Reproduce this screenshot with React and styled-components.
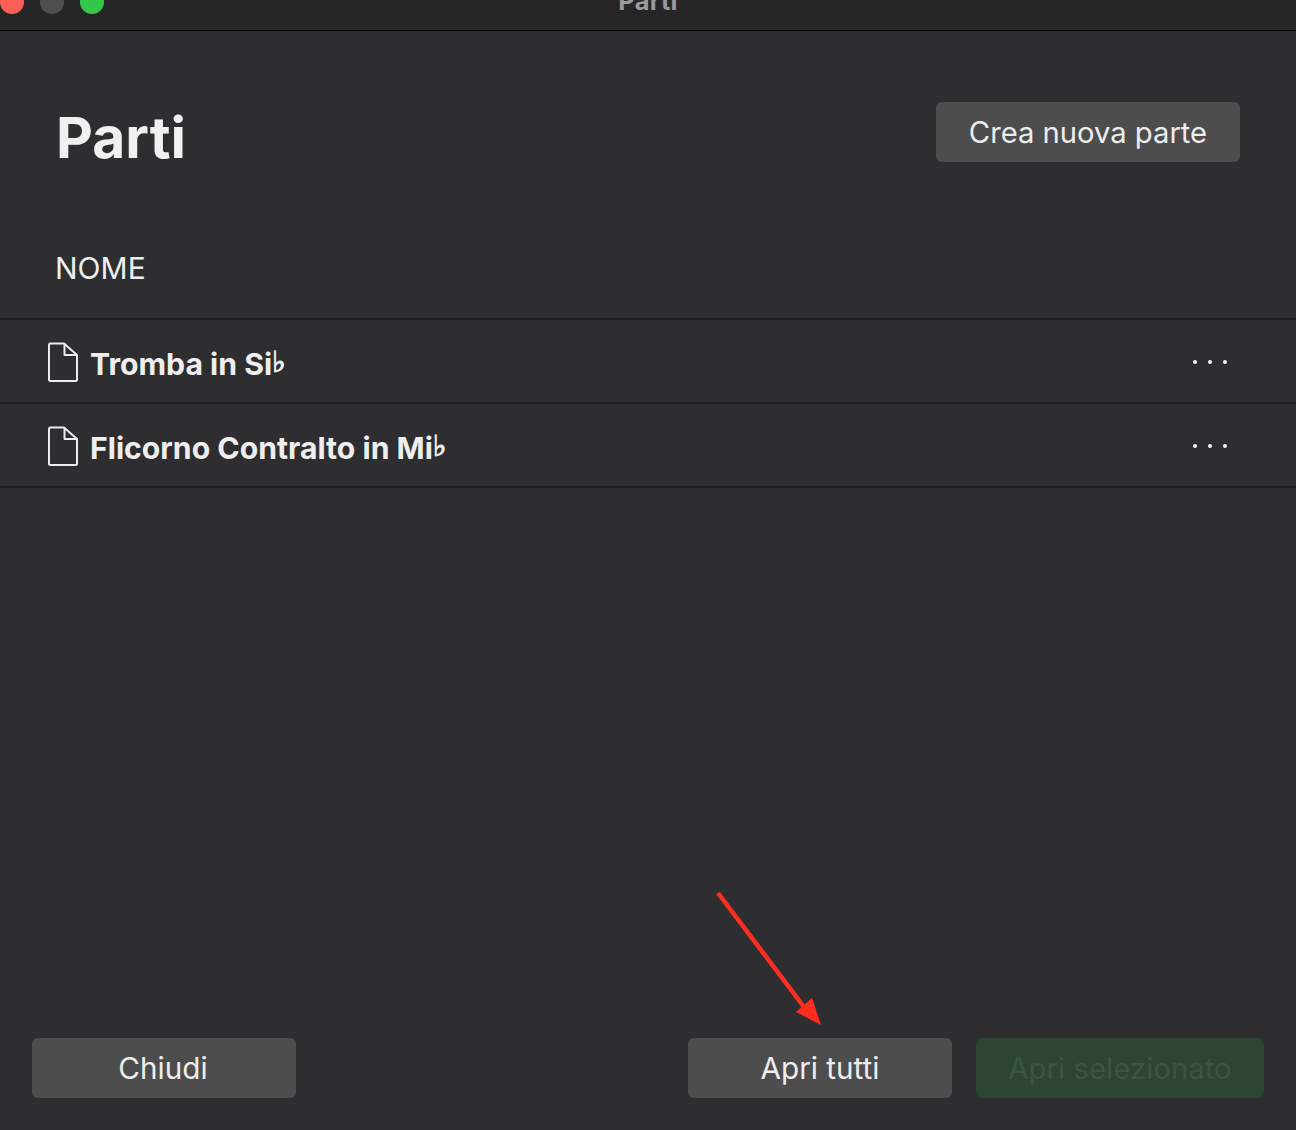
import React from "react";
import styled, { createGlobalStyle } from "styled-components";

const Global = createGlobalStyle`
  html, body { margin: 0; padding: 0; background: #2e2e30; }
  * { box-sizing: border-box; }
`;
const Window = styled.div`
  position: relative;
  width: 1296px;
  height: 1130px;
  overflow: hidden;
  display: flex;
  flex-direction: column;
  background: #2e2e30;
  color: #f0f0f0;
  font-family: Inter, "Liberation Sans", sans-serif;
`;
const TitleBar = styled.div`
  flex: none;
  height: 31px;
  background: #262626;
  border-bottom: 1px solid #000;
  display: grid;
  grid-template-columns: 1fr auto 1fr;
  overflow: hidden;
`;
const Lights = styled.div`
  display: flex;
  gap: 16px;
  margin: -10px 0 0 0;
  height: 24px;
`;
const Light = styled.span`
  width: 24px;
  height: 24px;
  border-radius: 50%;
  background: ${(p) => p.$c};
`;
const WindowTitle = styled.div`
  margin-top: -14px;
  font-size: 25.500px;
  line-height: 30px;
  font-weight: 700;
  color: #9a9a9a;
  letter-spacing: 0.3px;
`;
const Header = styled.div`
  flex: none;
  display: flex;
  justify-content: space-between;
  align-items: flex-start;
  padding: 71px 56px 0 56px;
  height: 205px;
`;
const Heading = styled.h1`
  margin: 2px 0 0;
  font-size: 57px;
  line-height: 68px;
  font-weight: 700;
  color: #f0f0f0;
`;
const Button = styled.button`
  width: ${(p) => p.$w}px;
  height: 60px;
  border: 0;
  border-radius: 6px;
  background: ${(p) => (p.$disabled ? "#2c4633" : "#4d4d4d")};
  color: ${(p) => (p.$disabled ? "#3c5543" : "#ededed")};
  font-family: inherit;
  font-size: ${(p) => p.$size || 29}px;
  font-weight: 400;
  padding: 0 ${(p) => p.$nudge || 0}px 0 0;
`;
const ColumnLabel = styled.div`
  flex: none;
  height: 84px;
  padding: 14px 55px 0;
  font-size: 30px;
  line-height: 36px;
  color: #eeeeee;
  border-bottom: 2px solid #1f1f21;
`;
const Row = styled.div`
  flex: none;
  height: 84px;
  display: flex;
  align-items: center;
  padding: 2px 56px 0 47px;
  border-bottom: 2px solid #1f1f21;
`;
const RowName = styled.div`
  flex: 1;
  margin: 3px 0 0 11px;
  font-size: 30.200px;
  line-height: 36px;
  font-weight: 700;
  color: #eeeeee;
`;
const Flat = styled.span`
  font-size: 29px;
  line-height: 0;
  font-family: "DejaVu Sans", sans-serif;
  font-weight: 400;
  -webkit-text-stroke: 1px #eeeeee;
  position: relative;
  top: -3px;
`;
const Dots = styled.div`
  display: flex;
  gap: 11px;
  margin-right: 13px;
  margin-top: 0;
`;
const Dot = styled.span`
  width: 4px;
  height: 4px;
  border-radius: 50%;
  background: #f5f5f5;
`;
const Spacer = styled.div`
  flex: 1;
`;
const Footer = styled.div`
  flex: none;
  display: flex;
  align-items: center;
  padding: 0 32px 32px;
  gap: 24px;
`;
const FooterGap = styled.div`
  flex: 1;
`;
const Arrow = styled.svg`
  position: absolute;
  left: 710px;
  top: 885px;
`;

const FileIcon = () => (
  <svg width="32" height="42" viewBox="0 0 32 42" fill="none" stroke="#ececec" strokeWidth="2" strokeLinejoin="round">
    <path d="M3 2.500h14L30 14v24.500a1.500 1.500 0 0 1-1.500 1.500h-25A1.500 1.500 0 0 1 2 38.500V4a1.500 1.500 0 0 1 1-1.500z" />
    <path d="M17.500 2.500V14H30" />
  </svg>
);

const PartRow = ({ name }) => (
  <Row>
    <FileIcon />
    <RowName>
      {name}
      <Flat>♭</Flat>
    </RowName>
    <Dots>
      <Dot />
      <Dot />
      <Dot />
    </Dots>
  </Row>
);

export default function App() {
  return (
    <Window>
      <Global />
      <TitleBar>
        <Lights>
          <Light $c="#ff5f57" />
          <Light $c="#4f4f4f" />
          <Light $c="#34c84a" />
        </Lights>
        <WindowTitle>Parti</WindowTitle>
        <div />
      </TitleBar>
      <Header>
        <Heading>Parti</Heading>
        <Button $w={304} $size={29.2}>Crea nuova parte</Button>
      </Header>
      <ColumnLabel>NOME</ColumnLabel>
      <PartRow name="Tromba in Si" />
      <PartRow name="Flicorno Contralto in Mi" />
      <Spacer />
      <Footer>
        <Button $w={264} $size={29.7} $nudge={2}>Chiudi</Button>
        <FooterGap />
        <Button $w={264} $size={29.7}>Apri tutti</Button>
        <Button $w={288} $size={29.4} $disabled>Apri selezionato</Button>
      </Footer>
      <Arrow width="120" height="150" viewBox="0 0 120 150">
        <line x1="8" y1="8" x2="94" y2="122" stroke="#ff2d20" strokeWidth="4.500" />
        <path d="M111 140 L86 127 L102 113 Z" fill="#ff2d20" />
      </Arrow>
    </Window>
  );
}
